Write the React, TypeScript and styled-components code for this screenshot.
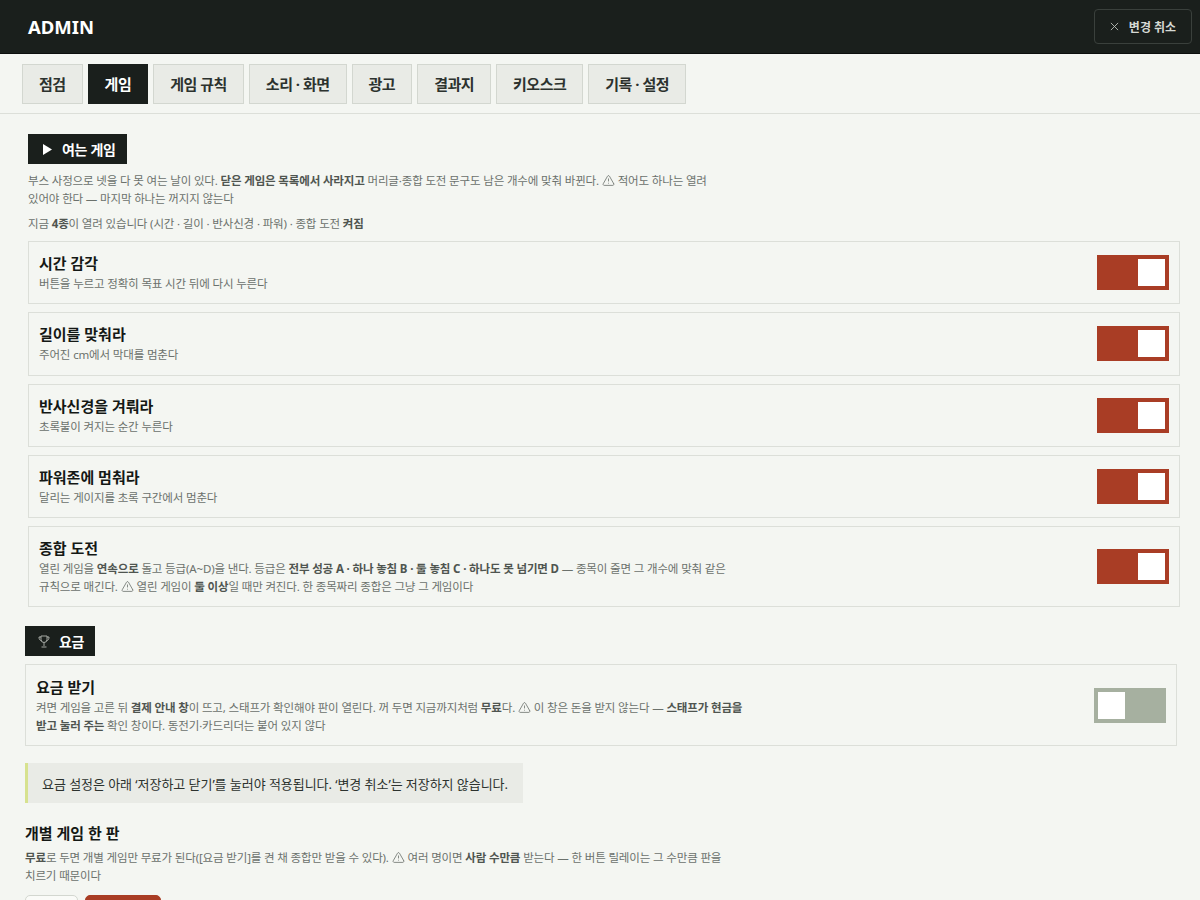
import React from 'react'
import styled, { createGlobalStyle } from 'styled-components'
import { TriangleAlert } from 'lucide-react'

const Global = createGlobalStyle`
  html, body { margin: 0; padding: 0; height: 900px; overflow: hidden; background: #f4f6f2; }
  body { font-family: "Noto Sans", "Noto Sans CJK KR", sans-serif; color: #1a1f1c; }
  * { box-sizing: border-box; }
`
const Header = styled.header`
  height: 54px;
  background: #1a1f1c;
  border-bottom: 1px solid #0c0f0d;
  display: flex;
  align-items: center;
  justify-content: space-between;
  padding: 0 8px 0 28px;
`
const Logo = styled.div`
  color: #fff;
  font-size: 18.5px;
  font-weight: 700;
`
const CancelButton = styled.button`
  width: 98px;
  height: 35px;
  display: flex;
  align-items: center;
  justify-content: center;
  gap: 10px;
  background: transparent;
  border: 1px solid #3a403c;
  border-radius: 4px;
  color: #d5d9d4;
  font: 700 12px "Noto Sans", "Noto Sans CJK KR", sans-serif;
  padding: 0;
`
const TabBar = styled.nav`
  height: 60px;
  display: flex;
  gap: 5px;
  padding: 10px 22px 0;
  border-bottom: 1px solid #dcdfd9;
`
const Tab = styled.div<{ $active?: boolean }>`
  height: 40px;
  padding: 0 16px 1px;
  display: flex;
  align-items: center;
  font-size: 15px;
  font-weight: 700;
  letter-spacing: -0.5px;
  background: ${p => (p.$active ? '#1a1f1c' : '#e9ebe6')};
  color: ${p => (p.$active ? '#fff' : '#2c322e')};
  border: 1px solid ${p => (p.$active ? '#1a1f1c' : '#d3d7d0')};
`
const Section = styled.section<{ $left: number; $top: number }>`
  padding: 0 0 0 ${p => p.$left}px;
  margin-top: ${p => p.$top}px;
  width: ${p => p.$left + 1152}px;
`
const Badge = styled.h2`
  display: flex;
  width: fit-content;
  align-items: center;
  height: 30px;
  gap: 9px;
  margin: 0;
  padding: 0 11px 0 13px;
  background: #1a1f1c;
  color: #fff;
  font-size: 14px;
  font-weight: 700;
  letter-spacing: -0.3px;
`
const Note = styled.p<{ $top?: number }>`
  margin: ${p => p.$top ?? 8}px 0 0;
  max-width: 700px;
  font-size: 11.5px;
  line-height: 18px;
  letter-spacing: -0.15px;
  word-break: keep-all;
  color: #6b716c;
  b { color: #4f5550; font-weight: 700; }
`
const Cards = styled.div`
  margin-top: 8px;
  display: flex;
  flex-direction: column;
  gap: 8px;
`
const Card = styled.div`
  display: flex;
  align-items: center;
  justify-content: space-between;
  padding: 10.2px 10px 10.1px;
  border: 1px solid #dcdfd9;
`
const CardText = styled.div`
  max-width: 720px;
`
const CardTitle = styled.div`
  margin-bottom: 1px;
  font-size: 15px;
  line-height: 22px;
  font-weight: 700;
  color: #141815;
`
const CardDesc = styled.div`
  font-size: 11.5px;
  line-height: 18px;
  letter-spacing: -0.15px;
  word-break: keep-all;
  color: #6b716c;
  b { color: #4f5550; font-weight: 700; }
`
const Switch = styled.div<{ $on: boolean }>`
  width: 72px;
  height: 35px;
  padding: 4px;
  display: flex;
  justify-content: ${p => (p.$on ? 'flex-end' : 'flex-start')};
  background: ${p => (p.$on ? '#a93d25' : '#a6b0a0')};
  flex-shrink: 0;
  &::after {
    content: '';
    width: 27px;
    height: 27px;
    background: #fff;
  }
`
const Alert = styled.div`
  margin-top: 17.5px;
  width: 498px;
  height: 40px;
  display: flex;
  align-items: center;
  padding-left: 14px;
  background: #e9ebe6;
  border-left: 3px solid #d7e28f;
  font-size: 13px;
  letter-spacing: -0.05px;
  color: #2c322e;
`
const SubTitle = styled.h3`
  margin: 19px 0 0;
  font-size: 15px;
  line-height: 22px;
  font-weight: 700;
  color: #141815;
`
const Choices = styled.div`
  margin-top: 10px;
  display: flex;
  gap: 7px;
`
const Choice = styled.div<{ $active?: boolean }>`
  width: ${p => (p.$active ? 76 : 53)}px;
  height: 36px;
  border-radius: 5px;
  border: 1px solid ${p => (p.$active ? '#a93d25' : '#d3d7d0')};
  background: ${p => (p.$active ? '#a93d25' : '#fafbf8')};
`
const WarnIcon = styled(TriangleAlert)`
  width: 13px;
  height: 13px;
  vertical-align: -2px;
  color: #6b716c;
`

const Warn = () => <WarnIcon strokeWidth={1.5} />

const games = [
  ['시간 감각', '버튼을 누르고 정확히 목표 시간 뒤에 다시 누른다'],
  ['길이를 맞춰라', '주어진 cm에서 막대를 멈춘다'],
  ['반사신경을 겨뤄라', '초록불이 켜지는 순간 누른다'],
  ['파워존에 멈춰라', '달리는 게이지를 초록 구간에서 멈춘다'],
]
const tabs = ['점검', '게임', '게임 규칙', '소리 · 화면', '광고', '결과지', '키오스크', '기록 · 설정']

export default function App() {
  return (
    <>
      <Global />
      <Header>
        <Logo>ADMIN</Logo>
        <CancelButton>
          <svg width="9" height="9" viewBox="0 0 10 10" stroke="#b9bdb8" strokeWidth="1"><path d="M1 1l8 8M9 1l-8 8" /></svg>
          변경 취소
        </CancelButton>
      </Header>
      <TabBar>
        {tabs.map(t => <Tab key={t} $active={t === '게임'}>{t}</Tab>)}
      </TabBar>
      <Section $left={28} $top={20}>
        <Badge>
          <svg width="12" height="11" viewBox="0 0 12 11" fill="#fff"><path d="M2 0l9 5.5L2 11z" /></svg>
          여는 게임
        </Badge>
        <Note>부스 사정으로 넷을 다 못 여는 날이 있다. <b>닫은 게임은 목록에서 사라지고</b> 머리글·종합 도전 문구도 남은 개수에 맞춰 바뀐다. <Warn /> 적어도 하나는 열려 있어야 한다 — 마지막 하나는 꺼지지 않는다</Note>
        <Note $top={7}>지금 <b>4종</b>이 열려 있습니다 (시간 · 길이 · 반사신경 · 파워) · 종합 도전 <b>켜짐</b></Note>
        <Cards>
          {games.map(([t, d]) => (
            <Card key={t}>
              <CardText><CardTitle>{t}</CardTitle><CardDesc>{d}</CardDesc></CardText>
              <Switch $on />
            </Card>
          ))}
          <Card>
            <CardText>
              <CardTitle>종합 도전</CardTitle>
              <CardDesc>열린 게임을 <b>연속으로</b> 돌고 등급(A~D)을 낸다. 등급은 <b>전부 성공 A · 하나 놓침 B · 둘 놓침 C · 하나도 못 넘기면 D</b> — 종목이 줄면 그 개수에 맞춰 같은 규칙으로 매긴다. <Warn /> 열린 게임이 <b>둘 이상</b>일 때만 켜진다. 한 종목짜리 종합은 그냥 그 게임이다</CardDesc>
            </CardText>
            <Switch $on />
          </Card>
        </Cards>
      </Section>
      <Section $left={25} $top={19}>
        <Badge>
          <svg width="12" height="13" viewBox="0 0 24 26" fill="none" stroke="#b4b8b2" strokeWidth="1.8"><path d="M6 2h12v7a6 6 0 0 1-12 0zM12 15v7M7 24h10M6 4H2c0 4 1 6 4.5 7.5M18 4h4c0 4-1 6-4.5 7.5" /></svg>
          요금
        </Badge>
        <Cards>
          <Card>
            <CardText>
              <CardTitle>요금 받기</CardTitle>
              <CardDesc>켜면 게임을 고른 뒤 <b>결제 안내 창</b>이 뜨고, 스태프가 확인해야 판이 열린다. 꺼 두면 지금까지처럼 <b>무료</b>다. <Warn /> 이 창은 돈을 받지 않는다 — <b>스태프가 현금을 받고 눌러 주는</b> 확인 창이다. 동전기·카드리더는 붙어 있지 않다</CardDesc>
            </CardText>
            <Switch $on={false} />
          </Card>
        </Cards>
        <Alert>요금 설정은 아래 ‘저장하고 닫기’를 눌러야 적용됩니다. ‘변경 취소’는 저장하지 않습니다.</Alert>
        <SubTitle>개별 게임 한 판</SubTitle>
        <Note $top={5}>
          <b>무료</b>로 두면 개별 게임만 무료가 된다([요금 받기]를 켠 채 종합만 받을 수 있다). <Warn /> 여러 명이면 <b>사람 수만큼</b> 받는다 — 한 버튼 릴레이는 그 수만큼 판을 치르기 때문이다
        </Note>
        <Choices><Choice /><Choice $active /></Choices>
      </Section>
    </>
  )
}
